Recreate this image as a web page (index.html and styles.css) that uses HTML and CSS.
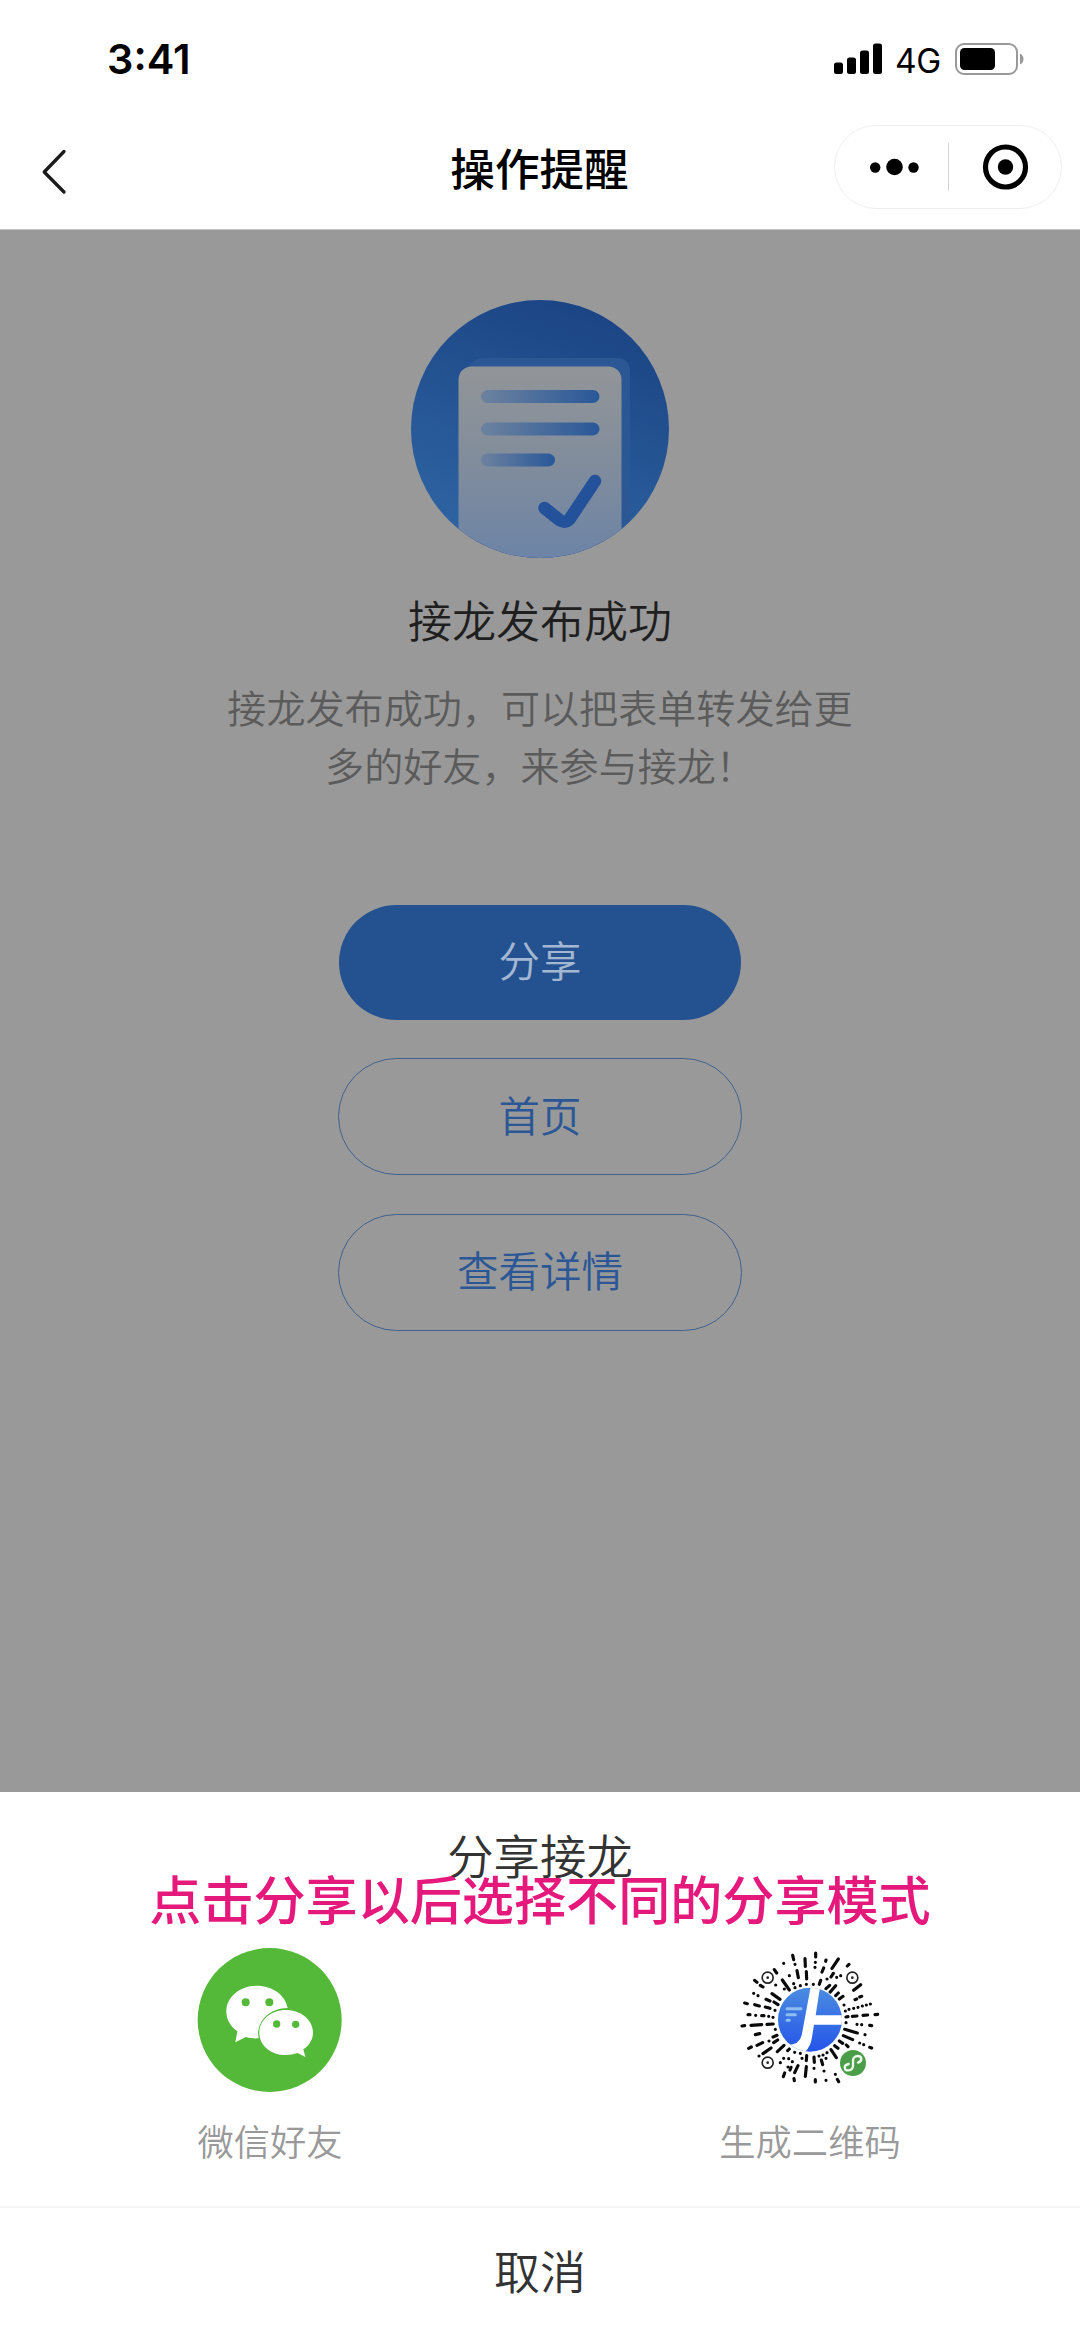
FILE: index.html
```html
<!DOCTYPE html>
<html lang="zh-CN">
<head>
<meta charset="utf-8">
<title>操作提醒</title>
<link rel="stylesheet" href="styles.css">
</head>
<body>
<header class="header">
  <div class="status">
    <span class="time">3:41</span>
    <div class="status-right">
      <svg class="signal" width="48" height="32" viewBox="0 0 48 32"><rect x="0" y="19.500" width="9" height="11.500" rx="2.500"/><rect x="13" y="14.500" width="9" height="16.500" rx="2.500"/><rect x="26" y="7.500" width="9" height="23.500" rx="2.500"/><rect x="39" y="0.500" width="9" height="30.500" rx="2.500"/></svg>
      <span class="network">4G</span>
      <svg class="battery" width="69" height="32" viewBox="0 0 69 32"><rect x="1" y="1" width="61" height="30" rx="8" fill="none" stroke="#999" stroke-width="2"/><rect x="5" y="5" width="35" height="22" rx="4.500"/><path d="M65 10.500q3.500 2 3.500 5.500t-3.500 5.500z" fill="#999"/></svg>
    </div>
  </div>
  <nav class="nav">
    <svg class="back" width="26" height="46" viewBox="0 0 26 46"><path d="M23 2.500 3.200 23 23 43" fill="none" stroke="#1a1a1a" stroke-width="3.300" stroke-linejoin="round" stroke-linecap="round"/></svg>
    <h1 class="nav-title">操作提醒</h1>
    <div class="capsule">
      <svg width="112" height="48" viewBox="0 0 112 48"><circle cx="40.200" cy="24.500" r="5.200"/><circle cx="59.500" cy="24" r="8.300"/><circle cx="78.500" cy="24.500" r="5.200"/></svg>
      <span class="divider"></span>
      <svg width="112" height="48" viewBox="0 0 112 48"><circle cx="56.500" cy="24" r="20" fill="none" stroke="#000" stroke-width="5.200"/><circle cx="56.500" cy="24" r="7.700"/></svg>
    </div>
  </nav>
</header>

<main class="result">
  <svg class="hero" width="258" height="258" viewBox="0 0 258 258">
    <defs>
      <linearGradient id="sky" x1=".65" y1="0" x2=".3" y2="1"><stop offset="0" stop-color="#1b4484"/><stop offset="1" stop-color="#2f65a4"/></linearGradient>
      <linearGradient id="paper" x1=".5" y1="0" x2=".5" y2="1"><stop offset="0" stop-color="#929598"/><stop offset=".45" stop-color="#828d9b"/><stop offset="1" stop-color="#6b83a7"/></linearGradient>
      <linearGradient id="line" x1="0" y1="0" x2="1" y2="0"><stop offset="0" stop-color="#6d829f"/><stop offset="1" stop-color="#285899"/></linearGradient>
      <clipPath id="disc"><circle cx="129" cy="129" r="129"/></clipPath>
    </defs>
    <g clip-path="url(#disc)">
      <rect width="258" height="258" fill="url(#sky)"/>
      <path d="M56 72q4-14 18-14h131q14 0 14 14v200H56z" fill="#2b5894"/>
      <rect x="47.500" y="66.500" width="163" height="200" rx="13" fill="url(#paper)"/>
      <rect x="70" y="90" width="118.500" height="13" rx="6.500" fill="url(#line)"/>
      <rect x="70" y="122.500" width="118.500" height="13" rx="6.500" fill="url(#line)"/>
      <rect x="70" y="153.500" width="74" height="13" rx="6.500" fill="url(#line)"/>
      <path d="m133.500 208 15 12q7 4.500 11.500-3L184 181" fill="none" stroke="#24529a" stroke-width="12.500" stroke-linecap="round" stroke-linejoin="round"/>
    </g>
  </svg>
  <h2 class="result-title">接龙发布成功</h2>
  <p class="result-text">接龙发布成功，可以把表单转发给更多的好友，来参与接龙！</p>
  <div class="actions">
    <button class="btn btn-primary">分享</button>
    <button class="btn">首页</button>
    <button class="btn">查看详情</button>
  </div>
</main>

<section class="sheet">
  <h2 class="sheet-title">分享接龙</h2>
  <p class="note">点击分享以后选择不同的分享模式</p>
  <div class="options">
    <div class="option">
      <svg class="option-icon" width="146" height="146" viewBox="82 51 438 438">
        <circle cx="300" cy="270" r="216" fill="#54b838"/>
        <path d="M261 167c-51 0-91 34-91 77 0 25 12 45 33 60l-6 33 32-16c14 4 25 5 38 4-9-44 27-91 87-91-7-39-45-67-93-67z" fill="#fff"/>
        <path d="M349 240c-45 0-80 30-80 68 0 39 35 67 80 67 12 0 24-2 35-6l23 12-6-23c19-13 29-31 29-50 0-38-36-68-81-68z" fill="#fff"/>
        <g fill="#54b838"><circle cx="228" cy="217" r="12"/><circle cx="299" cy="217" r="12"/><circle cx="321" cy="282" r="11"/><circle cx="378" cy="283" r="11"/></g>
      </svg>
      <span class="option-label">微信好友</span>
    </div>
    <div class="option">
      <svg class="option-icon" width="146" height="146" viewBox="81 51 438 438">
        <defs>
          <linearGradient id="logo" x1=".5" y1="0" x2=".5" y2="1"><stop offset="0" stop-color="#4b8de0"/><stop offset="1" stop-color="#2453ea"/></linearGradient>
          <clipPath id="logo-disc"><circle cx="300" cy="269" r="96"/></clipPath>
        </defs>
        <g fill="none" stroke="#0a0a0a" stroke-width="9.500" stroke-linecap="round">
          <path transform="translate(84 45)" d="M164 31l3 13M201 41l1 23M177 77l4 21M205 80l1 22M109 74l7 10M133 105l21 30M50 106l7 6M67 121l8 5M102 146l24 17M84 163l12 5M108 171l12 8M20 174l8 2M50 179l14 4M82 186l14 4M30 209h6M71 212h7M12 243l8-1M39 241l32-2M87 238l19-1M52 269l13-3M105 276l12-5M32 310l8-4M57 301l17-8M107 293l12-8M75 326l24-17M118 320l20-19M149 317l5-5M136 395l4-11M156 375l3-8M170 383l10-21M168 401l1 6M202 394l3-29M205 347l1-15"/>
          <path transform="translate(294 45)" d="M23 24v12M54 45l-1 4M42 81l5-12M72 70l19-28M118 63l5-5M69 96l7-11M34 118l4-12M54 131l11-10M66 142l17-20M83 152l8-8M137 136l21-17M94 162l11-8M141 164l5-2M155 156l6-2M114 216l6-1M133 214l14-1M165 211l14-1M201 209l8-1M185 241l6 1M110 253l38 11M106 272l28 12M94 288l10 7M115 300l5 5M80 302l10 8M69 314l16 24M18 336l1 16M40 345l4 14M22 404v7M88 403l4 7M185 307l6 2"/>
          <path transform="translate(84 45)" d="M171 58h.1M137 55h.1M154 92h.1M167 116h.1M171 128h.1M187 122h.1M205 118h.1M113 120h.1M139 132h.1M47 145h.1M60 152h.1M111 196h.1M53 211h.1M92 214h.1M105 217h.1M112 253h.1M93 288h.1M63 333h.1M127 353h.1M137 340h.1M152 341h.1M170 322h.1M150 366h.1M163 350h.1M187 325h.1M192 340h.1"/>
          <path transform="translate(294 45)" d="M22 52h.1M21 67h.1M16 118h.1M57 102h.1M86 97h.1M98 92h.1M108 180h.1M112 198h.1M123 193h.1M137 190h.1M150 187h.1M163 183h.1M175 180h.1M187 177h.1M114 233h.1M147 238h.1M161 239h.1M171 269h.1M155 294h.1M167 299h.1M57 323h.1M45 330h.1M33 333h.1M54 340h.1M18 370h.1M48 378h.1M82 388h.1M54 406h.1"/>
        </g>
        <g fill="none" stroke="#222" stroke-width="5"><circle cx="173" cy="143" r="16.500"/><circle cx="427" cy="143" r="16.500"/><circle cx="173" cy="398" r="16.500"/></g>
        <g fill="#222"><circle cx="173" cy="143" r="4"/><circle cx="427" cy="143" r="4"/><circle cx="173" cy="398" r="4"/></g>
        <circle cx="300" cy="269" r="99" fill="#fff"/>
        <g clip-path="url(#logo-disc)">
          <rect x="200" y="170" width="200" height="200" fill="url(#logo)"/>
          <path d="M303 165h28l-14 91h90v28h-95l-6 38q-4 30-25 48l-50-2v-23q38 0 44-29z" fill="#fff"/>
          <path d="M231 236h42M231 254h25M231 271h7" stroke="#8fbdf2" stroke-width="9" stroke-linecap="round"/>
        </g>
        <circle cx="429" cy="399" r="39" fill="#4a9e48"/>
        <path d="M416 402c-18 4-13 20-1 19 9-1 14-6 14-14v-16c0-7 6-13 14-13 14 0 15 15 1 20" fill="none" stroke="#f0f7ef" stroke-width="7" stroke-linecap="round"/>
      </svg>
      <span class="option-label">生成二维码</span>
    </div>
  </div>
  <button class="cancel">取消</button>
</section>
</body>
</html>
```
FILE: styles.css
```css
* { box-sizing: border-box; }

body {
  margin: 0;
  width: 1080px;
  height: 2337px;
  display: flex;
  flex-direction: column;
  overflow: hidden;
  background: #fff;
  font-family: "Noto Sans CJK SC", sans-serif;
}

h1, h2, p { margin: 0; font-weight: 350; }
svg { display: block; flex: none; }
button { border: 0; background: none; padding: 0; font-family: inherit; font-weight: 350; }

.header {
  height: 230px;
  flex: none;
  border-bottom: 1px solid #c4c4c4;
}

.status {
  height: 118px;
  padding: 0 56px 0 107px;
  display: flex;
  align-items: center;
  justify-content: space-between;
  font-family: Inter, sans-serif;
}

.time { font-size: 41.5px; font-weight: 600; line-height: 50px; }

.status-right { display: flex; align-items: center; }
.network { margin: 3px 14px 0 13px; font-size: 33.5px; line-height: 40px; letter-spacing: -0.3px; }

.nav {
  height: 98px;
  padding: 0 18px 0 41px;
  display: grid;
  grid-template-columns: 1fr auto 1fr;
  align-items: center;
}

.back { margin-top: 10px; }
.nav-title { font-size: 44.6px; line-height: 60px; font-weight: 500; margin-right: 24px; }

.capsule {
  justify-self: end;
  width: 228px;
  height: 84px;
  display: flex;
  align-items: center;
  justify-content: space-between;
  border: 1px solid #efefef;
  border-radius: 42px;
}

.divider { width: 1px; height: 48px; background: #d5d5d5; }

.result {
  height: 1562px;
  flex: none;
  padding-top: 70px;
  display: flex;
  flex-direction: column;
  align-items: center;
  background: #999;
}

.result-title { margin-top: 31px; font-size: 44px; line-height: 60px; color: #1f1f1f; }

.result-text {
  width: 630px;
  margin-top: 29px;
  font-size: 39.1px;
  line-height: 57.6px;
  text-align: center;
  color: #5b5b5b;
}

.actions {
  margin-top: 111.5px;
  display: flex;
  flex-direction: column;
  align-items: center;
  gap: 38.5px;
}

.btn {
  width: 404px;
  height: 117px;
  padding-bottom: 6px;
  border: 1px solid #40628f;
  border-radius: 59px;
  font-size: 41.5px;
  line-height: 60px;
  color: #2b5796;
}

.btn-primary {
  width: 402px;
  height: 115px;
  border: 0;
  background: #245290;
  color: #a3b6d2;
}

.sheet {
  position: relative;
  height: 545px;
  flex: none;
  display: flex;
  flex-direction: column;
}

.sheet-title {
  margin-top: 30px;
  font-size: 46.4px;
  line-height: 64px;
  text-align: center;
  color: #333;
}

/* Tutorial caption laid over the share sheet */
.note {
  position: absolute;
  top: 71px;
  left: 0;
  width: 100%;
  font-size: 52.1px;
  line-height: 70px;
  font-weight: 500;
  text-align: center;
  color: #e5187c;
}

.options {
  margin-top: 61px;
  display: grid;
  grid-template-columns: 1fr 1fr;
}

.option { display: flex; flex-direction: column; align-items: center; }
.option-label { margin-top: 22px; font-size: 36.3px; line-height: 50px; font-weight: 350; color: #999; }

.cancel {
  margin-top: 41px;
  height: 131px;
  padding-bottom: 8px;
  border-top: 2px solid #f6f6f6;
  font-size: 46px;
  line-height: 60px;
  color: #333;
}
```
